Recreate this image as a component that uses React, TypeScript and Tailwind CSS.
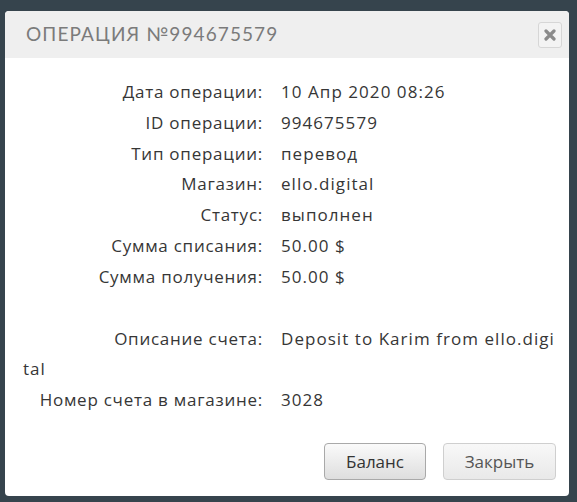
const rows: [string, string][] = [
  ["Дата операции:", "10 Апр 2020 08:26"],
  ["ID операции:", "994675579"],
  ["Тип операции:", "перевод"],
  ["Магазин:", "ello.digital"],
  ["Статус:", "выполнен"],
  ["Сумма списания:", "50.00 $"],
  ["Сумма получения:", "50.00 $"],
];

function Row({ label, value }: { label: string; value: string }) {
  return (
    <p className="break-all">
      <span className="inline-block w-[240px] text-right tracking-[0.75px]">{label}</span>
      <span className="ml-[18px] tracking-[1.05px]">{value}</span>
    </p>
  );
}

export default function App() {
  return (
    <div className="h-[502px] w-[577px] bg-[#36444d] px-[5px] pt-[11px] font-['Open_Sans',sans-serif]">
      <div className="flex h-[485px] w-[564px] flex-col overflow-hidden rounded-[4px] bg-white">
        <div className="flex h-[47px] items-center justify-between bg-[#efefef] pl-[21px] pr-[7px]">
          <h2 className="font-['Lato',sans-serif] text-[19px] tracking-[1.1px] text-[#7b7b7b]">ОПЕРАЦИЯ №994675579</h2>
          <button className="flex h-[26px] w-[24px] items-center justify-center rounded-[3px] border border-[#d6d6d6] bg-[#f3f3f3]">
            <svg width="12" height="12" viewBox="0 0 12 12">
              <path d="M2 2 L10 10 M10 2 L2 10" stroke="#8a8a8a" strokeWidth="3.2" strokeLinecap="round" />
            </svg>
          </button>
        </div>
        <div className="flex-1 pl-[18px] pr-[12px] pt-[19px] text-[17px] leading-[30.8px] text-[#363636]">
          {rows.map(([l, v]) => (
            <Row key={l} label={l} value={v} />
          ))}
          <div className="h-[31px]" />
          <Row label="Описание счета:" value="Deposit to Karim from ello.digital" />
          <Row label="Номер счета в магазине:" value="3028" />
        </div>
        <div className="flex justify-end gap-[17px] pb-[16px] pr-[13px]">
          <button className="h-[37px] w-[102px] rounded-[4px] border border-[#a9a9a9] bg-gradient-to-b from-[#fafafa] to-[#dedede] text-[17px] text-[#333]">
            Баланс
          </button>
          <button className="h-[37px] w-[113px] rounded-[4px] border border-[#cfcfcf] bg-gradient-to-b from-[#f8f8f8] to-[#e9e9e9] text-[17px] text-[#555]">
            Закрыть
          </button>
        </div>
      </div>
    </div>
  );
}
